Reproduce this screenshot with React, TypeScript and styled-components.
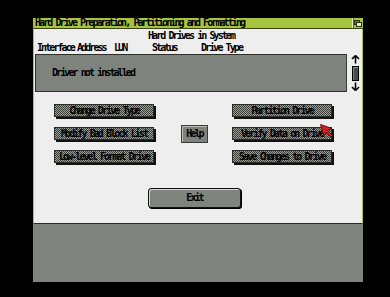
import styled, { createGlobalStyle } from 'styled-components'

const GlobalStyle = createGlobalStyle`
  html, body {
    margin: 0;
    background: #000;
  }
  body {
    width: 390px;
    height: 297px;
    overflow: hidden;
  }
`

const Display = styled.div`
  position: relative;
  box-sizing: border-box;
  width: 390px;
  height: 297px;
  padding: 18px 0 0 33px;
  background: #000;
  color: #000;
  font-family: "DejaVu Sans Mono", "Liberation Mono", monospace;
  font-size: 10px;
  font-weight: bold;
  letter-spacing: -1.92px;
  line-height: 10px;
`

const Screen = styled.div`
  display: flex;
  flex-direction: column;
  width: 330px;
  height: 264px;
  background: #7f837d;
`

const Window = styled.div`
  box-sizing: border-box;
  display: flex;
  flex-direction: column;
  height: 206px;
  background: #eeeeee;
  border-left: 1px solid #a6c43e;
  border-right: 1px solid #a6c43e;
  border-bottom: 1px solid #2a2c28;
`

const TitleBar = styled.div`
  display: flex;
  align-items: center;
  height: 10px;
  margin: 0 -1px;
  padding-left: 2px;
  background: #a6c43e;
  border-bottom: 1px solid #3a4418;
`

const Title = styled.span`
  flex: 1;
  white-space: nowrap;
`

const DepthGadget = styled.div`
  display: flex;
  align-items: center;
  justify-content: center;
  width: 10px;
  height: 10px;
  border-left: 1px solid #e4eec0;
  box-shadow: inset 1px 0 0 #5a6a20;
`

const Body = styled.div`
  display: flex;
  flex-direction: column;
  padding: 0 0 0 1px;
`

const Heading = styled.div`
  width: 312px;
  margin-top: 2px;
  text-align: center;
  white-space: nowrap;
`

const ColumnRow = styled.div`
  display: grid;
  grid-template-columns: 40px 37px 38px 49px auto;
  width: 312px;
  margin-top: 2px;
  padding-left: 2px;
  white-space: nowrap;
`

const ListRow = styled.div`
  display: flex;
  margin-top: 1px;
`

const ListBox = styled.div`
  box-sizing: border-box;
  display: flex;
  align-items: center;
  width: 312px;
  height: 38px;
  padding-left: 16px;
  background: #7f837d;
  border: 1px solid #2c2e2a;
  border-right-color: #3a3c38;
`

const Scroller = styled.div`
  display: flex;
  flex-direction: column;
  align-items: center;
  justify-content: space-between;
  width: 10px;
  height: 38px;
  margin-left: 3px;
  padding: 1px 0;
  box-sizing: border-box;
`

const Knob = styled.div`
  box-sizing: border-box;
  width: 7px;
  height: 15px;
  background: #4a4d48;
  border: 1px solid #000;
  box-shadow: inset 1px 1px 0 #7f837d;
`

const ButtonArea = styled.div`
  display: flex;
  margin: 12px 0 0 19px;
`

const ButtonColumn = styled.div`
  display: flex;
  flex-direction: column;
  gap: 10px;
`

const DitherButton = styled.div`
  box-sizing: border-box;
  width: 100px;
  height: 13px;
  display: flex;
  align-items: center;
  justify-content: center;
  white-space: nowrap;
  background: repeating-conic-gradient(#9a9e98 0 25%, #3c3e3a 0 50%) 0 0 / 2px 2px;
  border: 1px solid #2a2c28;
  box-shadow: 2px 2px 0 #111;
`

const HelpButton = styled.div`
  box-sizing: border-box;
  align-self: center;
  width: 27px;
  height: 18px;
  margin: 0 24px 0 27px;
  display: flex;
  align-items: center;
  justify-content: center;
  background: #7f837d;
  border: 1px solid #3a3c38;
  box-shadow: inset 1px 1px 0 #b8bcb4;
`

const ExitButton = styled.div`
  box-sizing: border-box;
  width: 93px;
  height: 20px;
  margin: 25px 0 0 113px;
  display: flex;
  align-items: center;
  justify-content: center;
  background: #80847e;
  border: 1px solid #111;
  border-radius: 3px;
  box-shadow: inset 1px 1px 0 #d4d6d0, 1px 1px 0 #000;
`

const Pointer = styled.svg`
  position: absolute;
  left: 320px;
  top: 124px;
`

const ArrowIcon = ({ up }: { up: boolean }) => (
  <svg width="9" height="9" viewBox="0 0 9 9">
    <path
      d={up ? 'M4.5 0.5 L8 4 M4.5 0.5 L1 4 M4.5 0.5 V8.5' : 'M4.5 8.5 L8 5 M4.5 8.5 L1 5 M4.5 8.5 V0.5'}
      stroke="#000"
      strokeWidth="1.6"
      fill="none"
    />
  </svg>
)

const leftButtons = ['Change Drive Type', 'Modify Bad Block List', 'Low-level Format Drive']
const rightButtons = ['Partition Drive', 'Verify Data on Drive', 'Save Changes to Drive']

export default function App() {
  return (
    <Display>
      <GlobalStyle />
      <Screen>
        <Window>
          <TitleBar>
            <Title>Hard Drive Preparation, Partitioning and Formatting</Title>
            <DepthGadget>
              <svg width="8" height="7" viewBox="0 0 8 7">
                <rect x="0.5" y="0.5" width="5" height="4" fill="#6f8428" stroke="#2a3010" />
                <rect x="2.5" y="2.5" width="5" height="4" fill="#e4eec0" stroke="#2a3010" />
              </svg>
            </DepthGadget>
          </TitleBar>
          <Body>
            <Heading>Hard Drives in System</Heading>
            <ColumnRow>
              <span>Interface</span>
              <span>Address</span>
              <span>LUN</span>
              <span>Status</span>
              <span>Drive Type</span>
            </ColumnRow>
            <ListRow>
              <ListBox>Driver not installed</ListBox>
              <Scroller>
                <ArrowIcon up />
                <Knob />
                <ArrowIcon up={false} />
              </Scroller>
            </ListRow>
            <ButtonArea>
              <ButtonColumn>
                {leftButtons.map((label) => (
                  <DitherButton key={label}>{label}</DitherButton>
                ))}
              </ButtonColumn>
              <HelpButton>Help</HelpButton>
              <ButtonColumn>
                {rightButtons.map((label) => (
                  <DitherButton key={label}>{label}</DitherButton>
                ))}
              </ButtonColumn>
            </ButtonArea>
            <ExitButton>Exit</ExitButton>
          </Body>
        </Window>
      </Screen>
      <Pointer width="14" height="14" viewBox="0 0 14 14">
        <path d="M0.5 0.5 L12 4.5 L7.5 6.5 L12.5 11.5 L11 13 L6 8 L4 12.5 Z" fill="#d42020" stroke="#6a0c0c" strokeWidth="1" />
      </Pointer>
    </Display>
  )
}
